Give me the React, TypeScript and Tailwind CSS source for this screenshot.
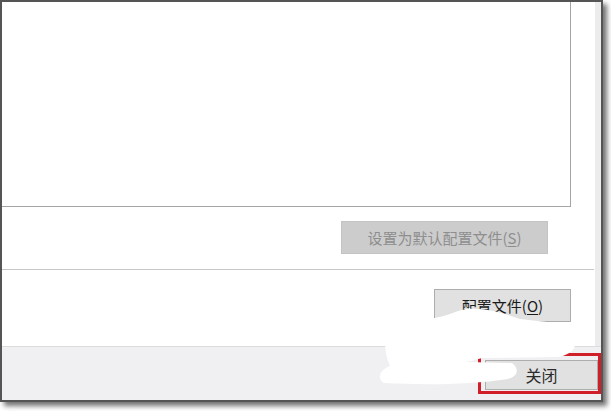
import React from "react";

const font = { fontFamily: '"Noto Sans CJK SC", "Noto Sans", sans-serif' };

export default function App() {
  return (
    <div className="relative w-[611px] h-[411px] bg-white overflow-hidden" style={font}>
      <div className="w-[603px] h-[402px] border-2 border-[#555555] bg-white flex flex-col shadow-[4px_4px_5px_rgba(0,0,0,0.55)]">
        <div className="flex flex-1">
          <div className="flex-1 flex flex-col">
            {/* listbox */}
            <div className="w-[569px] h-[205px] border-r border-b border-[#a5a5a5] bg-white" />
            {/* default button row */}
            <div className="h-[62px] flex items-start justify-end pr-[47px] pt-[14px]">
              <button
                disabled
                className="w-[207px] h-[33px] bg-[#cccccc] border border-[#c4c4c4] text-[15px] text-[#8e8e8e] flex items-center justify-center leading-none"
              >
                设置为默认配置文件(<span className="underline underline-offset-2">S</span>)
              </button>
            </div>
            <div className="h-px bg-[#c6c6c6] mr-[1px]" />
            {/* profile button row */}
            <div className="flex-1 flex items-start justify-end pr-[24px] pt-[19px]">
              <button className="w-[137px] h-[33px] bg-[#e1e1e1] border border-[#adadad] text-[15px] text-[#1a1a1a] flex items-center justify-center leading-none">
                配置文件(<span className="underline underline-offset-2">O</span>)
              </button>
            </div>
          </div>
          <div className="w-[6px] bg-[#ececec]" />
        </div>
        {/* footer */}
        <div className="h-[54px] border-t border-[#dcdcdc] bg-[#f0eff2] flex items-start justify-end pr-[1px] pt-[6px]">
          <div className="border-[3px] border-[#d11f2a] pl-[4px] pt-[4px] pb-[1px] pr-0 -mr-[1px]">
            <button className="w-[113px] h-[30px] bg-[#e1e1e1] border border-[#adadad] text-[16px] text-[#2a2a2a] flex items-center justify-center leading-none">
              关闭
            </button>
          </div>
        </div>
      </div>
      {/* white redaction scribble over the content */}
      <svg className="absolute left-0 top-0 pointer-events-none" width="611" height="411" viewBox="0 0 611 411">
        <path
          fill="#ffffff"
          d="M388,330 C402,322 438,320 458,311 C478,305 500,312 520,319 L556,323 C566,330 573,336 575,345 C574,352 565,356 558,357 L482,358 C476,360 470,361 465,362 L512,363 C519,368 519,376 508,379 C470,385 420,385 384,383 C377,379 379,370 390,366 C385,355 383,340 388,330 Z"
        />
        <path fill="#ffffff" d="M433,324 C445,318 455,312 470,308 L480,322 Z" />
      </svg>
    </div>
  );
}
